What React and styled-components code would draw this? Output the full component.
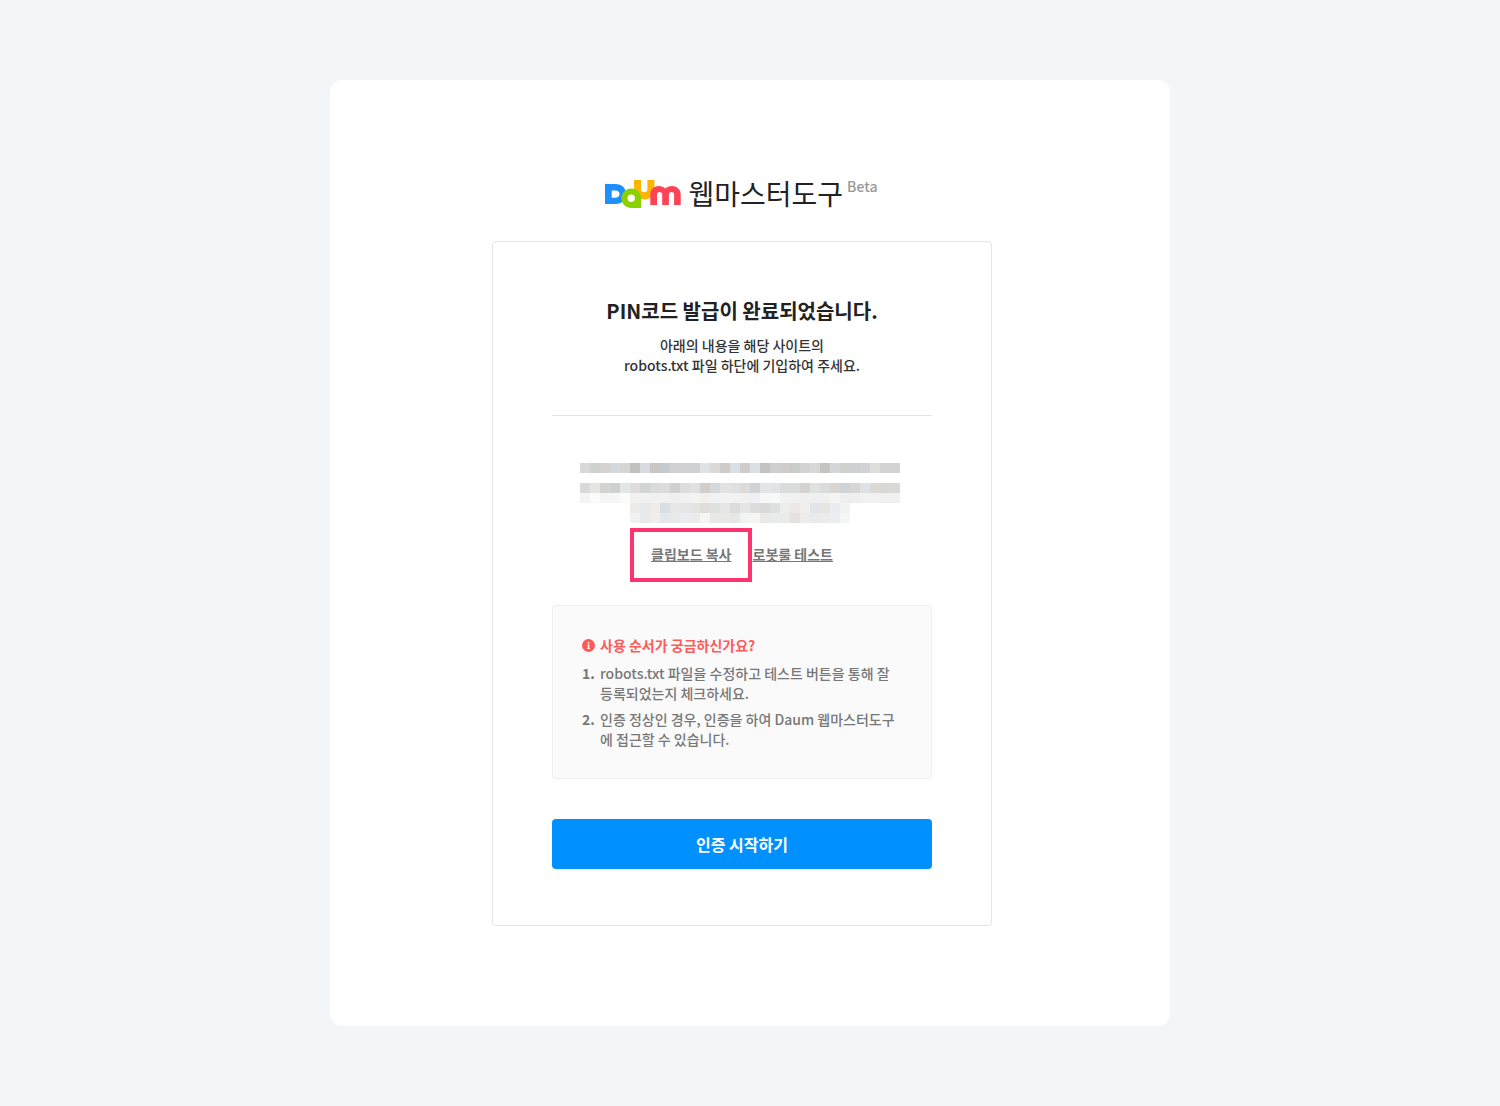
import React from "react";
import styled, { createGlobalStyle } from "styled-components";

const maskRows = [
  {
    y: 0,
    start: 0,
    cells:
      "d8d8d8 cfd1d0 d4d1ce d3d8dc d6d5d4 c0c0bf d8dce0 cac6c1 c5cacf d1d0d2 d2d1d2 d0d1d2 dfe2e2 dbdad9 cfcbc8 dadfe3 cecdcc dbe0e4 c4c3c3 cdcfd1 cfccca c9cccb d3d3d3 d7d7d7 c4c4c3 d5d6d8 d0d0cf cfd0d3 d1d2d4 dddddc d2d2d2 d2d2d2",
  },
  {
    y: 2,
    start: 0,
    cells:
      "d9d9d9 e5e5e4 d3d3d3 d0cfcf e1e6e6 dedcdd d2d3d3 d9dadc dddcdb d0d0d0 dddddd dee0e1 d1cdc8 d5d9dd e4e3e2 dee0e2 dedad8 d0d2d4 e3e5e7 e2e3e4 d9dcdb d9dcdb d4d3d2 e0e2e1 d9dbdd dad5d1 d0d2d5 d8d6d4 dfe1e4 dad9d8 d8d8d7 d9d9d9",
  },
  {
    y: 3,
    start: 0,
    cells:
      "f4f4f4 fbfbfb f5f5f5 f6f6f6 fafcfb f1f1f1 f1f1f1 f0f0f0 f1f1f1 f0f0f0 f1f1f1 f2f4f4 f2f0ed eff1f3 f2f2f2 f2f2f2 f0f0f0 eef0f3 f7f7f7 f8f8f8 f1f1f1 f1f1f1 f0f0f0 f0f0f0 f0f0f0 f4f4f4 efefef eeeeee f1f1f1 f1f1f1 f0f0f0 f0f0f0",
  },
  {
    y: 4,
    start: 5,
    cells:
      "ecebe9 e6e8ec efebe7 d9dee2 e7e7e7 e5e7e6 e4e4e4 dededd e1e1e0 e6e6e6 dddcda e4e6e8 dcdcda dadada dfe1e0 ededed ebe8e6 f2f0ee e1e4e8 e6e5e4 ebecef f1f3f3",
  },
  {
    y: 5,
    start: 5,
    cells:
      "f1f1f1 e9e9e9 efeeec e4e8eb e8e8e8 eaecef ebebeb f5f5f3 e8e8e8 e8e8e7 e6e6e6 f2f4f3 f5f5f3 ebe9e9 e9eceb e9ebea e4e2e0 ececea e8eaec ebebeb ededef f4f6f5",
  },
];

const steps = [
  "robots.txt 파일을 수정하고 테스트 버튼을 통해 잘 등록되었는지 체크하세요.",
  "인증 정상인 경우, 인증을 하여 Daum 웹마스터도구에 접근할 수 있습니다.",
];

const DaumLogo = () => (
  <svg width="76" height="28" viewBox="0 0 76 28" role="img" aria-label="Daum">
    <path
      fill="#ffb400"
      d="M29 0h7v9a3.2 3.2 0 0 0 6.400 0V0h7v9.500c0 6-4.400 10-10.200 10S29 15.500 29 9.500z"
    />
    <path
      fill="#1e8fff"
      fillRule="evenodd"
      d="M0 4h10.500c6.500 0 10.500 4.300 10.500 10s-4 10-10.500 10H0zM6.700 10.500v7.200h3.800c2.400 0 4-1.400 4-3.600s-1.600-3.600-4-3.600z"
    />
    <path
      fill="#8bd000"
      fillRule="evenodd"
      d="M26.200 8.500c5.500 0 9.800 4 9.800 9.500v10h-9.800c-5.500 0-9.700-4.200-9.700-9.700s4.200-9.800 9.700-9.800zM26.200 14.500a3.700 3.700 0 1 0 0 7.400 3.700 3.700 0 0 0 0-7.400z"
    />
    <path
      fill="#ff4357"
      d="M45.300 25V14.500c0-5 3.600-8.500 8.400-8.500 2.800 0 5 .9 6.600 2.600C61.900 6.900 64.200 6 67 6c5 0 8.700 3.500 8.700 8.500V25h-6.600V14.700c0-1.700-1-2.700-2.600-2.700s-2.600 1-2.600 2.700V25h-6.700V14.700c0-1.700-1-2.700-2.600-2.700s-2.600 1-2.600 2.700V25z"
    />
  </svg>
);

const MaskedPin = () => (
  <svg width="320" height="60" viewBox="0 0 320 60" shapeRendering="crispEdges" aria-hidden="true">
    {maskRows.map((row) =>
      row.cells.split(" ").map((color, i) => (
        <rect
          key={`${row.y}-${i}`}
          x={(row.start + i) * 10}
          y={row.y * 10}
          width="10"
          height="10"
          fill={`#${color}`}
        />
      ))
    )}
  </svg>
);

const InfoIcon = () => (
  <svg width="13" height="13" viewBox="0 0 13 13" aria-hidden="true">
    <circle cx="6.5" cy="6.5" r="6.5" fill="#ff5a5a" />
    <path fill="#fff" d="M5.800 3h1.500v1.500H5.800zM5.200 5.500h2.100V9H8v1H5.100V9h.7V6.500h-.6z" />
  </svg>
);

const App = () => {
  return (
    <>
      <GlobalStyle />
      <Page>
        <Card>
          <Header>
            <DaumLogo />
            <ServiceName>웹마스터도구</ServiceName>
            <Beta>Beta</Beta>
          </Header>
          <Panel>
            <Intro>
              <Title>PIN코드 발급이 완료되었습니다.</Title>
              <Desc>
                아래의 내용을 해당 사이트의
                <br />
                robots.txt 파일 하단에 기입하여 주세요.
              </Desc>
            </Intro>
            <PinArea>
              <MaskedPin />
            </PinArea>
            <Actions>
              <Highlighted>
                <TextButton type="button">클립보드 복사</TextButton>
              </Highlighted>
              <TextLink href="#robots">로봇룰 테스트</TextLink>
            </Actions>
            <Guide>
              <GuideTitle>
                <InfoIcon />
                사용 순서가 궁금하신가요?
              </GuideTitle>
              <Steps>
                {steps.map((step, i) => (
                  <li key={step}>
                    <strong>{i + 1}.</strong>
                    <span>{step}</span>
                  </li>
                ))}
              </Steps>
            </Guide>
            <SubmitButton type="button">인증 시작하기</SubmitButton>
          </Panel>
        </Card>
      </Page>
    </>
  );
};

export default App;

const GlobalStyle = createGlobalStyle`
  * {
    box-sizing: border-box;
  }
  body {
    margin: 0;
    background: #f3f5f9;
    color: #222;
    font-family: "Noto Sans CJK KR", sans-serif;
    font-size: 14px;
    font-weight: 500;
    line-height: 20px;
  }
  button {
    font: inherit;
    cursor: pointer;
  }
  svg {
    display: block;
    flex-shrink: 0;
  }
`;

const Page = styled.div`
  padding: 80px 20px;
`;

const Card = styled.main`
  display: flex;
  flex-direction: column;
  align-items: center;
  max-width: 840px;
  margin: 0 auto;
  padding: 94px 16px 100px 0;
  border-radius: 12px;
  background: #fff;
`;

const Header = styled.header`
  display: flex;
  align-items: center;
  margin: 0 2px 27px 0;
`;

const ServiceName = styled.span`
  margin-left: 8px;
  padding-bottom: 2px;
  font-size: 28px;
  font-weight: 400;
  line-height: 38px;
`;

const Beta = styled.span`
  align-self: flex-start;
  margin-left: 4px;
  padding-top: 2px;
  color: #999;
`;

const Panel = styled.section`
  width: 100%;
  max-width: 500px;
  padding: 54px 59px 56px;
  border: 1px solid #e5e5e5;
  border-radius: 4px;
`;

const Intro = styled.div`
  padding-bottom: 40px;
  border-bottom: 1px solid #e5e5e5;
  text-align: center;
`;

const Title = styled.h1`
  margin: 0 0 9px;
  font-size: 20px;
  font-weight: 700;
  line-height: 30px;
`;

const Desc = styled.p`
  margin: 0;
  color: #333;
`;

const PinArea = styled.div`
  display: flex;
  justify-content: center;
  margin: 47px 4px 21px 0;
`;

const Actions = styled.div`
  display: flex;
  justify-content: center;
  gap: 21px;
  margin-bottom: 41px;
`;

const Highlighted = styled.span`
  position: relative;
  &::after {
    content: "";
    position: absolute;
    inset: -16px -20px -18px -21px;
    border: 4px solid #ff336f;
    pointer-events: none;
  }
`;

const TextButton = styled.button`
  display: block;
  padding: 0;
  border: 0;
  background: none;
  color: #777;
  font-weight: 700;
  text-decoration: underline;
`;

const TextLink = styled.a`
  color: #777;
  font-weight: 700;
`;

const Guide = styled.div`
  padding: 29px;
  border: 1px solid #eee;
  border-radius: 4px;
  background: #fafafa;
  color: #777;
`;

const GuideTitle = styled.h2`
  display: flex;
  align-items: center;
  gap: 5px;
  margin: 0 0 8px;
  color: #ff5a5a;
  font-size: 14px;
  font-weight: 700;
`;

const Steps = styled.ol`
  display: grid;
  gap: 6px;
  margin: 0;
  padding: 0;
  list-style: none;
  li {
    display: flex;
  }
  strong {
    flex: 0 0 18px;
  }
`;

const SubmitButton = styled.button`
  display: block;
  width: 100%;
  height: 50px;
  margin-top: 40px;
  border: 0;
  border-radius: 4px;
  background: #0090ff;
  color: #fff;
  font-size: 16px;
  font-weight: 700;
`;
